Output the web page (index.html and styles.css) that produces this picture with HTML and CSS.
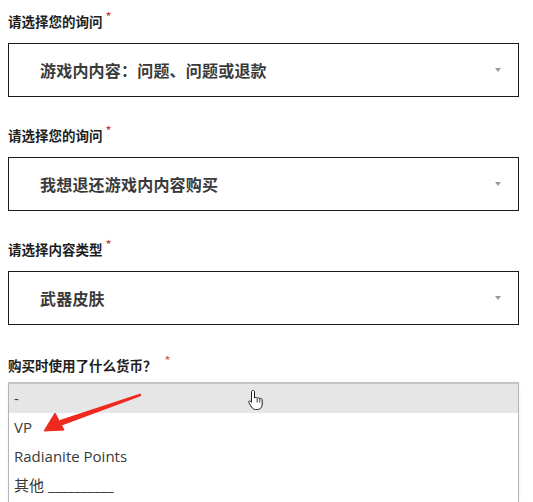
FILE: index.html
```html
<!DOCTYPE html>
<html lang="zh-CN">
<head>
<meta charset="utf-8">
<link rel="stylesheet" href="styles.css">
</head>
<body>
<div class="form">
  <div class="field">
    <div class="label">请选择您的询问<span class="req">*</span></div>
    <div class="select"><span class="value">游戏内内容：问题、问题或退款</span><span class="caret"></span></div>
  </div>
  <div class="field">
    <div class="label">请选择您的询问<span class="req">*</span></div>
    <div class="select"><span class="value">我想退还游戏内内容购买</span><span class="caret"></span></div>
  </div>
  <div class="field">
    <div class="label">请选择内容类型<span class="req">*</span></div>
    <div class="select"><span class="value">武器皮肤</span><span class="caret"></span></div>
  </div>
  <div class="field field-open">
    <div class="label">购买时使用了什么货币？<span class="req req-gap">*</span></div>
    <div class="listbox">
      <div class="option active">-</div>
      <div class="option">VP</div>
      <div class="option">Radianite Points</div>
      <div class="option">其他 __________</div>
      <svg class="arrow" width="140" height="52" viewBox="0 0 140 52">
        <path d="M127 11 L49 40 L48 37 Z" fill="#ee2a1f" stroke="#ee2a1f" stroke-width="2.5" stroke-linejoin="round"/>
        <path d="M31 47 L42 29 L51 46 Z" fill="#ee2a1f" stroke="#ee2a1f" stroke-width="1" stroke-linejoin="round"/>
      </svg>
      <svg class="cursor" width="18" height="22" viewBox="0 0 18 22">
        <path d="M6 1.5 C7 1.5 7.5 2 7.5 3 L7.5 9 C8 8.3 9.8 8.3 10.2 9.3 C10.8 8.6 12.4 8.7 12.8 9.8 C13.4 9.2 15 9.4 15.2 10.8 L15.2 15 C15.2 18 13.5 20.5 10.5 20.5 L8.5 20.5 C6.5 20.5 5.5 19.5 4.5 18 L1.8 13.5 C1.2 12.5 2.5 11.3 3.5 12.2 L4.5 13.3 L4.5 3 C4.5 2 5 1.5 6 1.5 Z" fill="#fff" stroke="#222" stroke-width="1"/>
        <path d="M10.2 9.5 L10.2 13.5 M12.8 10 L12.8 13.5" stroke="#222" stroke-width="0.9"/>
      </svg>
    </div>
  </div>
</div>
</body>
</html>
```
FILE: styles.css
```css
html, body {
  margin: 0;
  padding: 0;
  background: #ffffff;
}
body {
  font-family: "Noto Sans CJK SC", "Noto Sans", sans-serif;
  color: #222;
  overflow: hidden;
}
.form {
  padding: 11px 14px 0 8px;
}
.field {
  margin-bottom: 28px;
}
.label {
  font-size: 13.5px;
  font-weight: 700;
  line-height: 20px;
  height: 20px;
  color: #1e1e1e;
  white-space: nowrap;
}
.req {
  color: #c0392b;
  font-weight: 400;
  font-size: 13px;
  position: relative;
  top: -5px;
  margin-left: 3px;
}
.req-gap {
  margin-left: 8px;
  color: #d65a5a;
}
.select {
  margin-top: 12px;
  height: 52px;
  border: 1px solid #1a1a1a;
  display: flex;
  align-items: center;
  justify-content: space-between;
  padding: 0 17px 0 31px;
}
.value {
  font-size: 16px;
  font-weight: 700;
  color: #3a3a3a;
  letter-spacing: 0.2px;
}
.caret {
  width: 0;
  height: 0;
  border-left: 3px solid transparent;
  border-right: 3px solid transparent;
  border-top: 4px solid #9a9a9a;
}
.field-open {
  margin-top: 30px;
  margin-bottom: 0;
}
.field-open .label {
  margin-bottom: 7px;
}
.listbox {
  position: relative;
  border: 1px solid #b4b4b4;
  border-top: 2px solid #c4c4c4;
  border-bottom: none;
  box-shadow: 0 1px 3px rgba(0,0,0,0.08);
  height: 118px;
}
.option {
  height: 29px;
  line-height: 29px;
  padding-left: 5px;
  font-family: "Open Sans", "Noto Sans CJK SC", sans-serif;
  font-size: 15px;
  color: #3a3a3a;
}
.option.active {
  background: #e6e6e6;
}
.arrow {
  position: absolute;
  left: 4px;
  top: 0;
}
.cursor {
  position: absolute;
  left: 238px;
  top: 5px;
}
```
